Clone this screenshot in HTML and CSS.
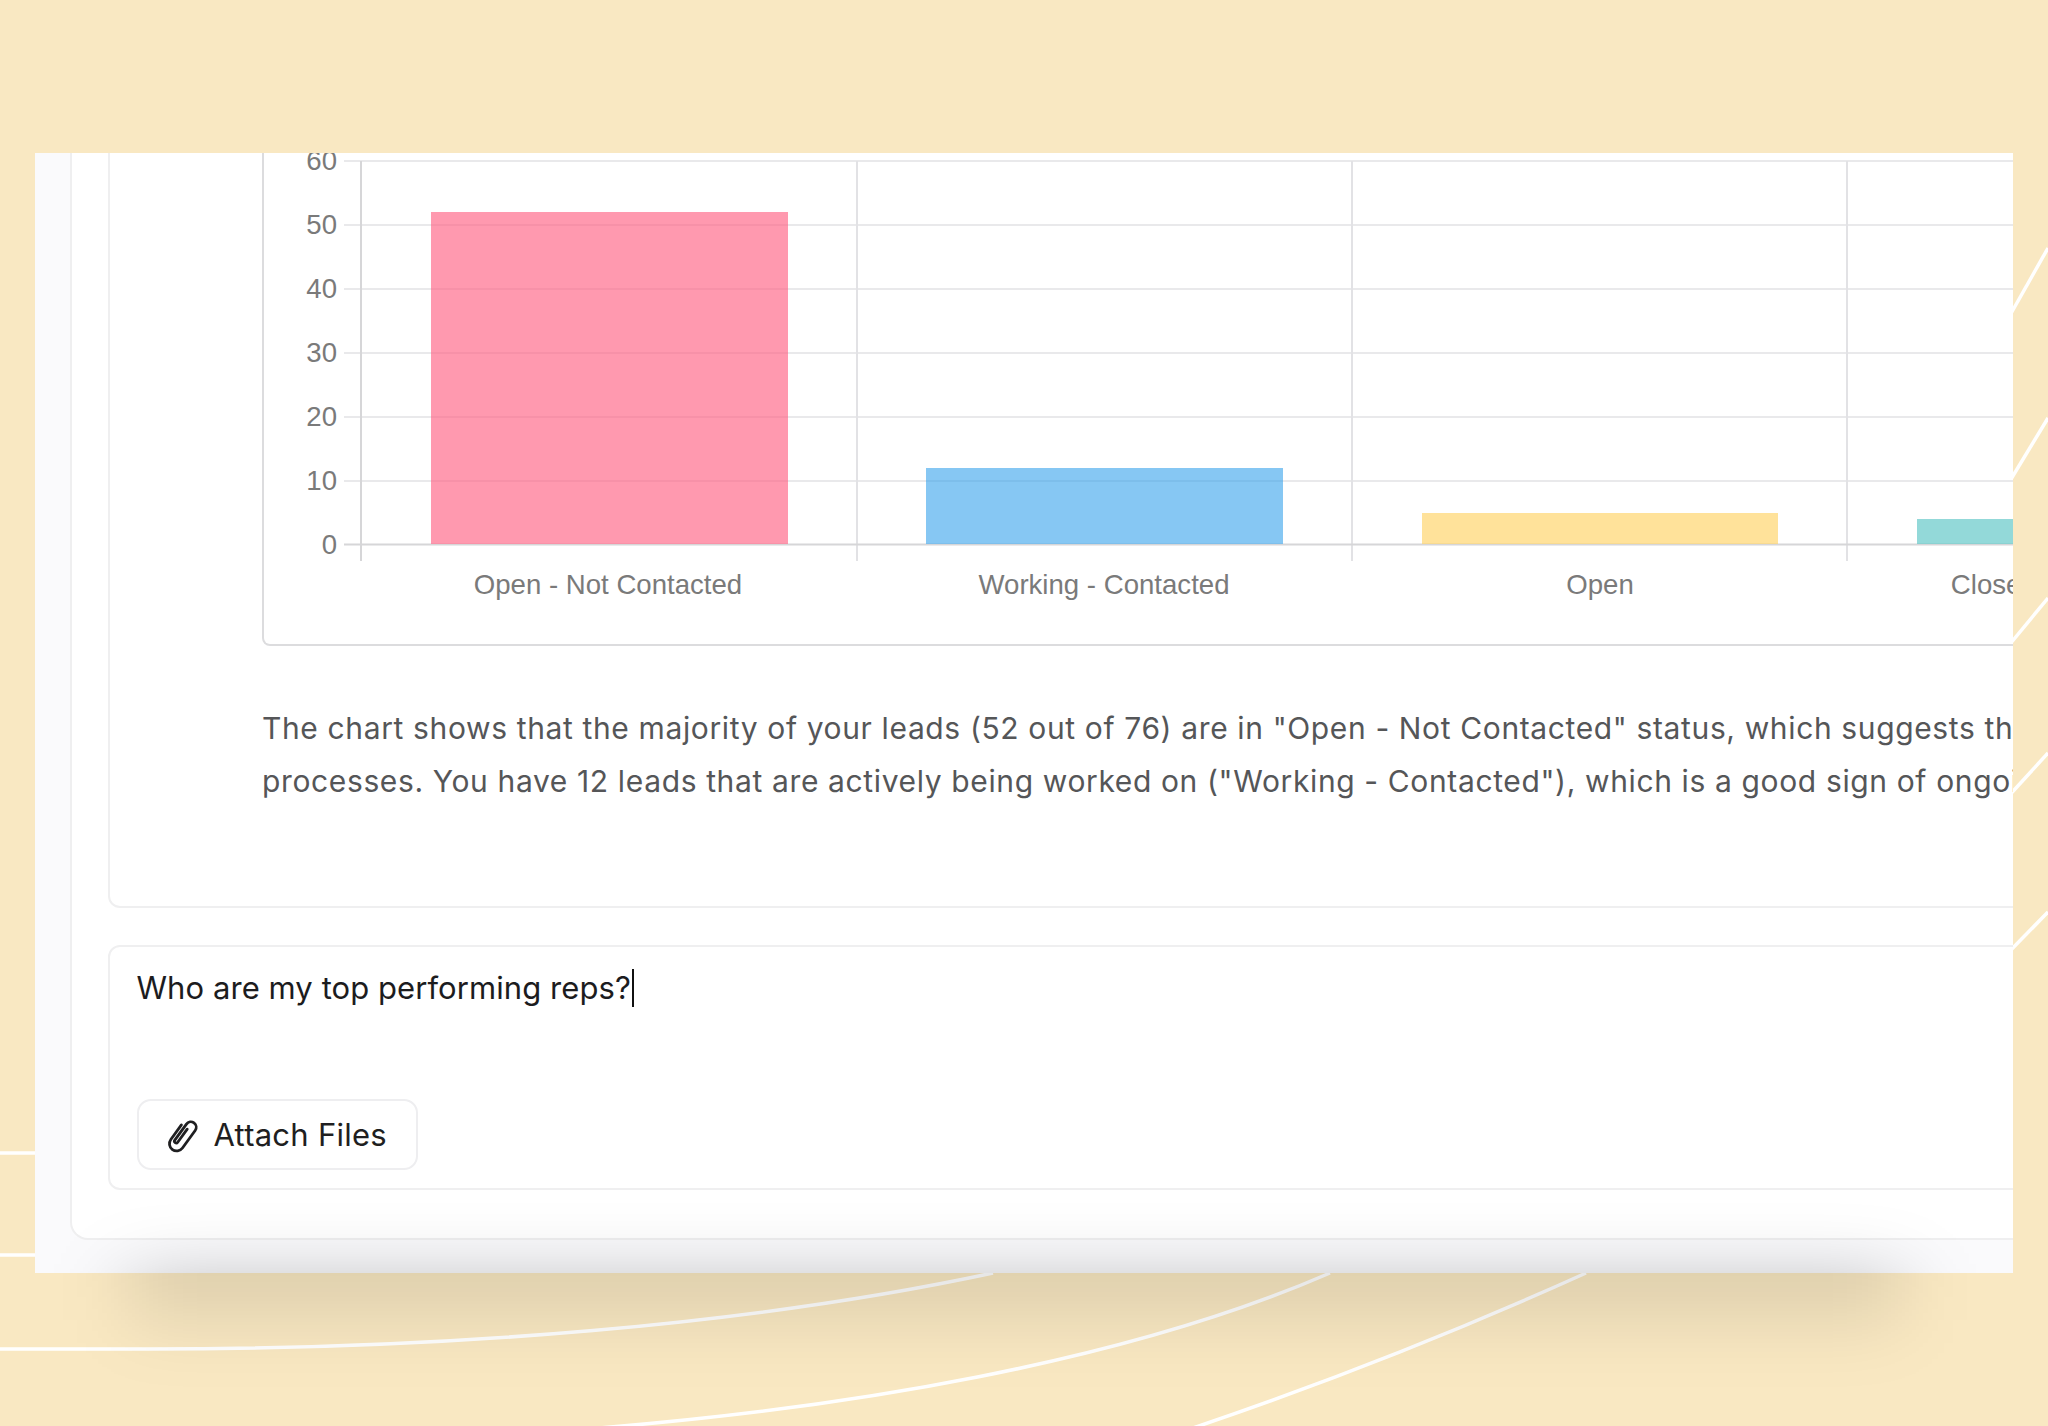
FILE: index.html
```html
<!DOCTYPE html>
<html lang="en">
<head>
<meta charset="utf-8">
<title>Leads chat</title>
<link rel="stylesheet" href="styles.css">
</head>
<body>
<div class="page">
  <svg class="backdrop" viewBox="0 0 2048 1426" aria-hidden="true">
    <g class="curves">
      <path d="M0 1153H40"/>
      <path d="M0 1255H40"/>
      <path d="M0 1349H150C450 1349 750 1325 993 1273"/>
      <path d="M560 1431C850 1410 1130 1360 1330 1273"/>
      <path d="M1190 1429C1320 1385 1460 1330 1586 1273"/>
      <path d="M2005 324L2048 248"/>
      <path d="M2005 489L2048 418"/>
      <path d="M2005 650L2048 598"/>
      <path d="M2005 800L2048 753"/>
      <path d="M2005 956L2048 912"/>
    </g>
  </svg>
  <div class="drop"></div>
  <main class="window">
    <section class="panel">
      <article class="message">
        <figure class="chart">
          <svg class="plot" viewBox="264 146 1800 498" role="img" aria-label="Leads by status">
            <g class="grid">
              <path d="M344 161H2064M344 225H2064M344 289H2064M344 353H2064M344 417H2064M344 481H2064"/>
              <path class="vertical" d="M857 161V561M1352 161V561M1847 161V561"/>
            </g>
            <path class="axis" d="M361 161V561M344 544.5H2064"/>
            <rect class="bar pink" x="431" y="212" width="357" height="332"/>
            <rect class="bar blue" x="926" y="468" width="357" height="76"/>
            <rect class="bar yellow" x="1422" y="513" width="356" height="31"/>
            <rect class="bar teal" x="1917" y="519" width="357" height="25"/>
            <g class="ticks">
              <text x="337" y="170">60</text>
              <text x="337" y="234">50</text>
              <text x="337" y="298">40</text>
              <text x="337" y="362">30</text>
              <text x="337" y="426">20</text>
              <text x="337" y="490">10</text>
              <text x="337" y="554">0</text>
            </g>
            <g class="labels">
              <text x="608" y="594">Open - Not Contacted</text>
              <text x="1104" y="594">Working - Contacted</text>
              <text x="1600" y="594">Open</text>
              <text x="2095" y="594">Closed - Not Converted</text>
            </g>
          </svg>
        </figure>
        <p class="summary">The chart shows that the majority of your leads (52 out of 76) are in "Open - Not Contacted" status, which suggests that<br>processes. You have 12 leads that are actively being worked on ("Working - Contacted"), which is a good sign of ongoing</p>
      </article>
      <form class="composer">
        <div class="prompt">Who are my top performing reps?<span class="caret"></span></div>
        <button class="attach" type="button">
          <svg class="clip" viewBox="2 2 20 20" aria-hidden="true"><path d="M8 8V18a4 4 0 0 0 8 0V6a3 3 0 0 0-6 0V17a1 1 0 0 0 2 0V8" transform="rotate(36 12 12)"/></svg>
          <span>Attach Files</span>
        </button>
      </form>
    </section>
    <div class="inner-shade"></div>
  </main>
</div>
</body>
</html>
```

FILE: styles.css
```css
* { box-sizing: border-box; }
html, body { margin: 0; padding: 0; }
body { background: #f9e8c2; font-family: "Inter", "Liberation Sans", sans-serif; }

.page {
  position: relative;
  width: 2048px;
  height: 1426px;
  padding: 153px 35px;
  overflow: hidden;
}
.backdrop { position: absolute; inset: 0; width: 2048px; height: 1426px; }
.curves path { fill: none; stroke: #fff; stroke-width: 3.5; }

.drop {
  position: absolute;
  left: 130px;
  width: 1770px;
  top: 1150px;
  height: 170px;
  background: rgba(0, 0, 0, 0.1);
  filter: blur(35px);
}

.window {
  position: relative;
  width: 1978px;
  height: 1120px;
  display: flex;
  flex-direction: column;
  justify-content: flex-end;
  align-items: flex-start;
  padding: 0 0 33px 35px;
  background: #fafafc;
  overflow: hidden;
}
.inner-shade {
  position: absolute;
  left: 95px;
  width: 1770px;
  top: 1137px;
  height: 200px;
  background: rgba(0, 0, 0, 0.3);
  filter: blur(40px);
  pointer-events: none;
}

.panel {
  flex: none;
  width: 2100px;
  padding: 0 0 48px 36px;
  background: #fff;
  border: 2px solid #efeff0;
  border-top: 0;
  border-radius: 0 0 18px 18px;
  display: flex;
  flex-direction: column;
  gap: 37px;
}

.message {
  padding: 0 0 97.5px 152px;
  border: 2px solid #efeff0;
  border-top: 0;
  border-radius: 0 0 12px 12px;
}
.chart {
  margin: 0;
  border: 2px solid #dcdcde;
  border-top: 0;
  border-radius: 0 0 8px 8px;
  overflow: hidden;
}
.plot { display: block; width: 1800px; height: 498px; }
.grid path { fill: none; stroke: #e9e9eb; stroke-width: 2; }
.grid .vertical { stroke: #e2e2e5; }
.axis { fill: none; stroke: #d6d6d8; stroke-width: 2; }
.bar.pink { fill: rgba(255, 99, 132, 0.65); }
.bar.blue { fill: rgba(54, 162, 235, 0.6); }
.bar.yellow { fill: rgba(255, 206, 86, 0.6); }
.bar.teal { fill: rgba(75, 192, 192, 0.6); }
.ticks text {
  font: 27.6px "Liberation Sans", Arial, sans-serif;
  fill: #7a7a7a;
  text-anchor: end;
}
.labels text {
  font: 27.6px "Liberation Sans", Arial, sans-serif;
  fill: #7a7a7a;
  text-anchor: middle;
}

.summary {
  margin: 55.5px 0 0;
  font-size: 30px;
  letter-spacing: 0.63px;
  line-height: 53.5px;
  color: #555658;
  white-space: nowrap;
}

.composer {
  display: flex;
  flex-direction: column;
  align-items: flex-start;
  height: 245px;
  padding: 19px 0 0 26.5px;
  border: 2px solid #efeff0;
  border-radius: 12px;
}
.prompt {
  font-size: 31px;
  letter-spacing: 0.07px;
  line-height: 44px;
  height: 133px;
  color: #1c1c1e;
  white-space: nowrap;
  display: flex;
  align-items: flex-start;
}
.caret {
  flex: none;
  width: 2px;
  height: 38px;
  margin: 3px 0 0 1px;
  background: #111;
}
.attach {
  display: flex;
  align-items: center;
  gap: 13px;
  height: 71px;
  width: 281px;
  padding: 0 0 0 26px;
  background: #fff;
  border: 2px solid #eeeef0;
  border-radius: 14px;
  font: 31px "Inter", "Liberation Sans", sans-serif;
  letter-spacing: 0.25px;
  color: #1f1f21;
}
.clip { width: 36px; height: 36px; flex: none; }
.clip path { fill: none; stroke: #1f1f21; stroke-width: 1.55; stroke-linecap: round; stroke-linejoin: round; }
```
